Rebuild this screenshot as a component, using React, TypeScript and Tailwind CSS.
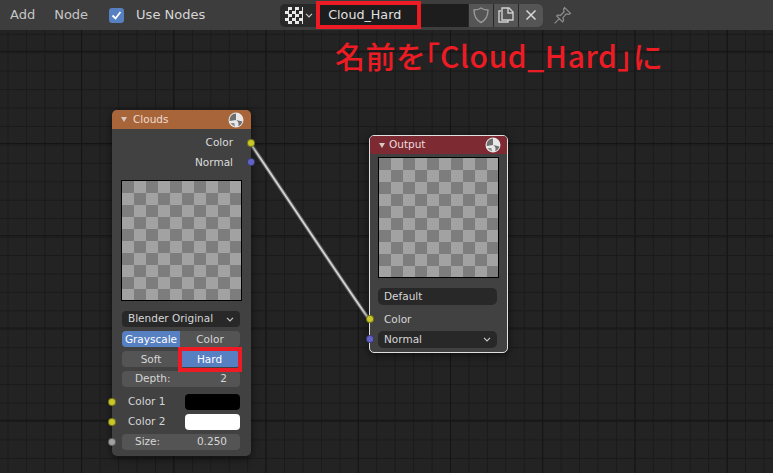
import React from "react";

const font = { fontFamily: '"DejaVu Sans", sans-serif' };

function Ball({ className }: { className: string }) {
  return (
    <svg width="16" height="16" viewBox="0 0 16 16" className={className}>
      <circle cx="8" cy="8" r="7.5" fill="#e8e8e8" />
      <path d="M8 1.5 A6.5 6.5 0 0 0 1.6 9 L8 8 Z" fill="#6e6e6e" />
      <path d="M8.2 8 L14.4 9.6 A6.5 6.5 0 0 1 10 14.2 A4.5 4.5 0 0 0 8.2 8 Z" fill="#6e6e6e" />
      <path d="M2.6 11 A6 6 0 0 0 7 14.4 L6.4 11 Z" fill="#8f8f8f" />
    </svg>
  );
}

function Socket({ color, top, side }: { color: string; top: number; side: "l" | "r" }) {
  return (
    <span
      className={`absolute w-[8px] h-[8px] rounded-full border border-black/40 ${side === "l" ? "left-[-4px]" : "right-[-4px]"}`}
      style={{ top, backgroundColor: color }}
    />
  );
}

function Tri() {
  return <span className="w-0 h-0 border-l-[3px] border-r-[3px] border-t-[5px] border-l-transparent border-r-transparent border-t-[#d8c8c0] mr-[6px] ml-[9px]" />;
}

function Chevron() {
  return (
    <svg width="8" height="5" viewBox="0 0 8 5" fill="none" stroke="#c8c8c8" strokeWidth="1.2">
      <path d="M1 0.8 L4 3.8 L7 0.8" />
    </svg>
  );
}

function Checker() {
  return (
    <div className="w-[121px] h-[121px] border border-black bg-[#7d7d7d] bg-[conic-gradient(#a2a2a2_25%,#7d7d7d_0_50%,#a2a2a2_0_75%,#7d7d7d_0)] bg-[length:24px_24px]" />
  );
}

export default function App() {
  return (
    <div className="w-[773px] h-[473px] overflow-hidden flex flex-col bg-[#232323] text-[10.5px] text-[#d6d6d6]" style={font}>
      <header className="h-[30px] shrink-0 bg-[#3d3d3d] flex items-center relative">
        <span className="ml-[10px] text-[13px] text-[#c6c6c6]">Add</span>
        <span className="ml-[19px] text-[13px] text-[#c6c6c6]">Node</span>
        <span className="ml-[21px] w-[15px] h-[15px] rounded-[3px] bg-[#5680c2] flex items-center justify-center">
          <svg width="11" height="11" viewBox="0 0 11 11" fill="none" stroke="#fff" strokeWidth="1.8">
            <path d="M1.5 5.5 L4.5 8.5 L9.5 2" />
          </svg>
        </span>
        <span className="ml-[12px] text-[13px] text-[#d6d6d6]">Use Nodes</span>

        <div className="ml-[75px] h-[23px] w-[263px] rounded-[5px] bg-[#282828] flex items-center">
          <span className="ml-[5px] w-[18px] h-[17px] bg-[#e8e8e8] bg-[conic-gradient(#e8e8e8_25%,#2b2b2b_0_50%,#e8e8e8_0_75%,#2b2b2b_0)] bg-[length:7px_7px]" />
          <span className="ml-[2px]"><Chevron /></span>
          <span className="ml-[3px] h-[23px] w-[152px] bg-[#1d1d1d] flex items-center text-[12.7px] text-[#e0e0e0]"><span className="ml-[12px]">Cloud_Hard</span></span>
          <span className="h-[23px] w-[24px] ml-[1px] bg-[#555] flex items-center justify-center">
            <svg width="18" height="18" viewBox="0 0 18 18" fill="none" stroke="#999" strokeWidth="1.4"><path d="M9 2 C11 3.5 13.5 4 16 4 C16 10 14 14 9 16.5 C4 14 2 10 2 4 C4.5 4 7 3.5 9 2 Z" /></svg>
          </span>
          <span className="h-[23px] w-[24px] ml-[1px] bg-[#555] flex items-center justify-center">
            <svg width="18" height="18" viewBox="0 0 18 18" fill="none" stroke="#d0d0d0" strokeWidth="1.4"><path d="M4 5 H2 V16 H11 V14 M5 14 V2 H12 L16 6 V14 Z M11 2.5 V7 H16" /></svg>
          </span>
          <span className="h-[23px] w-[24px] ml-[1px] rounded-r-[5px] bg-[#555] flex items-center justify-center">
            <svg width="12" height="12" viewBox="0 0 12 12" fill="none" stroke="#d8d8d8" strokeWidth="1.5"><path d="M1.5 1.5 L10.5 10.5 M10.5 1.5 L1.5 10.5" /></svg>
          </span>
        </div>
        <svg className="ml-[10px]" width="19" height="19" viewBox="0 0 18 18" fill="none" stroke="#8c8c8c" strokeWidth="1.2">
          <path d="M11 1.5 L16.5 7 L15 8 L12.5 7.5 L9.5 11 L10 14 L9 15 L3.5 9.5 L4.5 8.5 L7 9 L10.5 5.5 L10 3 Z M6 12 L1.5 16.5" />
        </svg>

        <span className="absolute left-[316px] top-[1px] w-[105px] h-[28px] border-[4px] border-[#ed1c24]" />
      </header>

      <main className="relative flex-1 bg-[#232323] bg-[linear-gradient(90deg,#141414_1px,transparent_1px),linear-gradient(#141414_1px,transparent_1px),linear-gradient(90deg,#1a1a1a_1px,transparent_1px),linear-gradient(#1a1a1a_1px,transparent_1px)] bg-[size:92.25px_92.25px,92.25px_92.25px,18.45px_18.45px,18.45px_18.45px] bg-[position:81px_0,0_20.75px,7.5px_0,0_3.8px]">
        <div className="absolute left-[335px] top-[6px] text-[30px] leading-[38px] tracking-[0.6px] font-medium text-[#ed1c24] whitespace-nowrap [font-feature-settings:'palt']" style={{ fontFamily: '"Noto Sans CJK JP", sans-serif' }}>
          名前を「Cloud_Hard」に
        </div>

        <svg className="absolute left-0 top-0" width="773" height="443" fill="none">
          <path d="M250 113 C262 130 356 272 369 289" stroke="#5c5c5c" strokeWidth="4" />
          <path d="M250 113 C262 130 356 272 369 289" stroke="#d4d4d4" strokeWidth="1.8" />
        </svg>

        {/* Clouds node */}
        <section className="absolute left-[112px] top-[80px] w-[139px] h-[346px] rounded-[5px] bg-[#414141] shadow-[0_2px_8px_rgba(0,0,0,0.6)] flex flex-col">
          <div className="h-[19px] shrink-0 rounded-t-[5px] bg-[#a8653a] flex items-center text-[#ecdcd0]">
            <Tri />
            <span className="pt-[1px]">Clouds</span>
            <Ball className="ml-auto mr-[7px]" />
          </div>
          <div className="text-right pr-[18px] pt-[4px] leading-[19.5px] text-[#dcdcdc]">
            <div>Color</div>
            <div>Normal</div>
          </div>
          <div className="ml-[9px] mt-[8px]"><Checker /></div>
          <div className="ml-[10px] mr-[11px] mt-[10px] flex flex-col gap-[4px]">
            <div className="h-[16px] rounded-[4px] bg-[#282828] flex items-center justify-between px-[6px]">
              <span>Blender Original</span><Chevron />
            </div>
            <div className="h-[16px] rounded-[4px] overflow-hidden flex text-center leading-[16px]">
              <span className="w-[58px] bg-[#5680c2] text-white">Grayscale</span>
              <span className="flex-1 bg-[#545454]">Color</span>
            </div>
            <div className="h-[16px] flex text-center leading-[16px] relative">
              <span className="w-[59px] pr-[1px] rounded-l-[4px] bg-[#545454]">Soft</span>
              <span className="flex-1 pr-[2px] rounded-r-[4px] bg-[#5680c2] text-white">Hard</span>
              <span className="absolute left-[56px] top-[-4px] w-[64px] h-[25px] border-[4px] border-[#ed1c24]" />
            </div>
            <div className="h-[16px] rounded-[4px] bg-[#545454] flex items-center justify-between px-[13px]">
              <span>Depth:</span><span>2</span>
            </div>
          </div>
          <div className="ml-[10px] mr-[11px] mt-[7px] flex flex-col gap-[4px]">
            <div className="h-[16px] flex items-center justify-between pl-[6px]">
              <span>Color 1</span><span className="w-[55px] h-[16px] rounded-[4px] bg-black" />
            </div>
            <div className="h-[16px] flex items-center justify-between pl-[6px]">
              <span>Color 2</span><span className="w-[55px] h-[16px] rounded-[4px] bg-white" />
            </div>
            <div className="h-[16px] rounded-[4px] bg-[#545454] flex items-center justify-between px-[13px]">
              <span>Size:</span><span>0.250</span>
            </div>
          </div>
          <Socket color="#c7c729" top={29} side="r" />
          <Socket color="#6363c7" top={48} side="r" />
          <Socket color="#c7c729" top={288} side="l" />
          <Socket color="#c7c729" top={308} side="l" />
          <Socket color="#a1a1a1" top={328} side="l" />
        </section>

        {/* Output node */}
        <section className="absolute left-[369px] top-[105px] w-[139px] h-[218px] rounded-[5px] bg-[#414141] border border-[#e0e0e0] shadow-[0_2px_8px_rgba(0,0,0,0.6)] flex flex-col">
          <div className="h-[18px] shrink-0 rounded-t-[4px] bg-[#7d2a33] flex items-center text-[#ecdcdc]">
            <Tri />
            <span className="-ml-[2px]">Output</span>
            <Ball className="ml-auto mr-[6px]" />
          </div>
          <div className="ml-[8px] mt-[3px]"><Checker /></div>
          <div className="ml-[8px] mr-[10px] mt-[10px] h-[17px] rounded-[5px] bg-[#282828] flex items-center px-[6px]">Default</div>
          <div className="mx-[14px] mt-[6px] h-[17px] flex items-center">Color</div>
          <div className="ml-[8px] mr-[10px] mt-[3px] h-[17px] rounded-[5px] bg-[#282828] flex items-center justify-between px-[6px]">
            <span>Normal</span><Chevron />
          </div>
          <Socket color="#c7c729" top={179} side="l" />
          <Socket color="#6363c7" top={199} side="l" />
        </section>
      </main>
    </div>
  );
}
